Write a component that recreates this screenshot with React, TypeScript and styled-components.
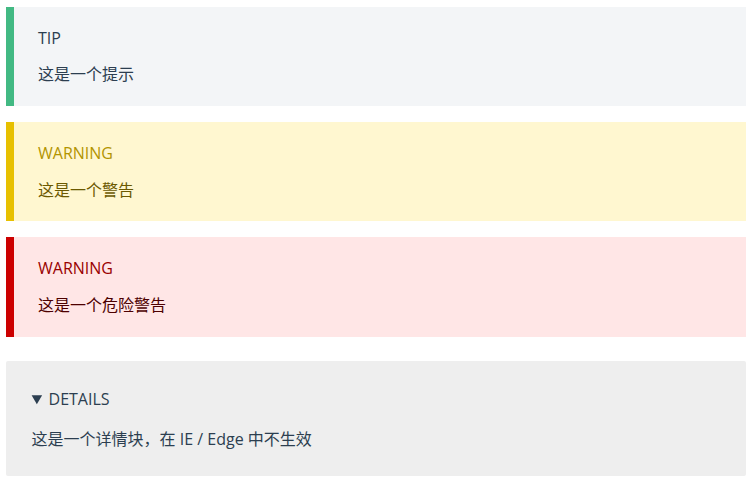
import React from "react";
import styled, { createGlobalStyle } from "styled-components";

const Global = createGlobalStyle`
  html, body { margin: 0; padding: 0; background: #fff; }
  body {
    font-family: "Open Sans", "Noto Sans CJK SC", sans-serif;
    font-size: 16px;
    color: #2c3e50;
    -webkit-font-smoothing: antialiased;
  }
`;

const Page = styled.div`
  padding: 7px 10px 0 6px;
  display: flex;
  flex-direction: column;
`;

type Kind = "tip" | "warning" | "danger";

const palette: Record<Kind, { bg: string; border: string; title: string; text: string }> = {
  tip: { bg: "#f3f5f7", border: "#42b983", title: "#2c3e50", text: "#2c3e50" },
  warning: { bg: "#fff7d0", border: "#e7c000", title: "#b29400", text: "#6b5900" },
  danger: { bg: "#ffe6e6", border: "#cc0000", title: "#990000", text: "#4d0000" },
};

const Block = styled.div<{ $kind: Kind }>`
  background: ${(p) => palette[p.$kind].bg};
  border-left: 8px solid ${(p) => palette[p.$kind].border};
  color: ${(p) => palette[p.$kind].text};
  padding: 1.6px 24px;
  margin-bottom: 16px;
`;

const Title = styled.p<{ $kind: Kind }>`
  margin: 16px 0 -6.4px;
  line-height: 27.2px;
  font-weight: 500;
  color: ${(p) => palette[p.$kind].title};
`;

const Text = styled.p`
  margin: 16px 0;
  line-height: 27.2px;
`;

const Details = styled.details`
  margin-top: 8.6px;
  background: #eeeeee;
  border-radius: 2px;
  padding: 25.6px;
  line-height: 24px;
`;

const Summary = styled.summary`
  outline: none;
  cursor: pointer;
  color: #2c3e50;
  &::marker { font-size: 16px; }
`;

const DetailsText = styled.p`
  margin: 16px 0 0;
  line-height: 24px;
`;

export default function App() {
  return (
    <>
      <Global />
      <Page>
        <Block $kind="tip">
          <Title $kind="tip">TIP</Title>
          <Text>这是一个提示</Text>
        </Block>
        <Block $kind="warning">
          <Title $kind="warning">WARNING</Title>
          <Text>这是一个警告</Text>
        </Block>
        <Block $kind="danger">
          <Title $kind="danger">WARNING</Title>
          <Text>这是一个危险警告</Text>
        </Block>
        <Details open>
          <Summary>DETAILS</Summary>
          <DetailsText>这是一个详情块，在 IE / Edge 中不生效</DetailsText>
        </Details>
      </Page>
    </>
  );
}
